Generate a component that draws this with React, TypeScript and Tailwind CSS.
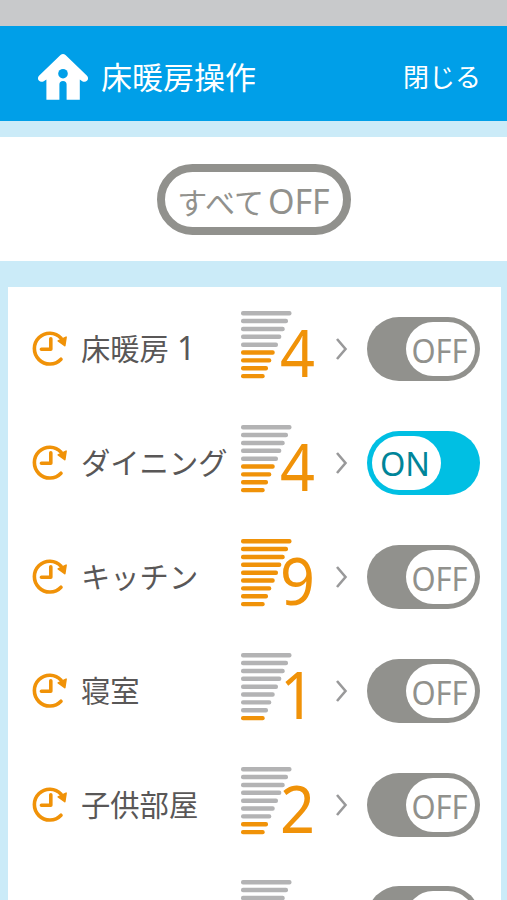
import React from "react";

const latin = "font-['Noto_Sans','Open_Sans',sans-serif]";
const cjk = "font-['Noto_Sans_CJK_JP',sans-serif]";

type Room = { name: string; number?: string; level: number; on: boolean };

const rooms: Room[] = [
  { name: "床暖房", number: "1", level: 4, on: false },
  { name: "ダイニング", level: 4, on: true },
  { name: "キッチン", level: 9, on: false },
  { name: "寝室", level: 1, on: false },
  { name: "子供部屋", level: 2, on: false },
  { name: "", level: 0, on: false },
];

function HomeIcon() {
  return (
    <svg className="mt-[2px] block h-[46px] w-[50px] shrink-0" viewBox="0 0 50 46">
      <path
        d="M22.5 1.1Q25 -1 27.5 1.1L49 21.8Q51 24.4 49.2 26.6Q47 28.8 44.2 27.2L41.8 25.6V45.8H28.6V30.5Q28.6 27 25 27Q21.4 27 21.4 30.5V45.8H8.4V25.6L5.8 27.2Q3 28.8 .8 26.6Q-1 24.4 1 21.8Z"
        fill="#fff"
      />
      <circle cx="25" cy="19.7" r="4.8" fill="#009fe8" />
    </svg>
  );
}

function TimerIcon() {
  return (
    <svg className="block h-[36px] w-[36px] shrink-0" viewBox="0 0 36 36" fill="none" stroke="#f09208">
      <path d="M29 29.2A15.4 15.4 0 1 1 29.1 8.2" strokeWidth="3.6" strokeLinecap="round" />
      <path d="M18.8 8.8V19.2H9.4" strokeWidth="3.6" strokeLinecap="round" strokeLinejoin="round" />
      <path d="M26.2 10.9L34.1 7.1L32.8 15.6Z" fill="#f09208" strokeWidth="1.6" strokeLinejoin="round" />
    </svg>
  );
}

const barWidths = [50.5, 47, 43.7, 40.3, 37, 33.7, 30.3, 27, 23.7];

function Level({ level }: { level: number }) {
  return (
    <div className="relative h-[68px] w-[74px] shrink-0">
      <svg className="block h-[68px] w-[52px]" viewBox="0 0 52 68">
        {barWidths.map((w, i) => (
          <rect
            key={i}
            x="0"
            y={i * 7.87}
            width={w}
            height="4.4"
            rx="2"
            fill={9 - i <= level ? "#f09208" : "#b3b3b4"}
          />
        ))}
      </svg>
      {level > 0 && (
        <span
          className={`absolute top-[-3px] left-[38px] block w-[37px] origin-center scale-x-[0.94] text-center text-[65px] leading-[88px] text-[#f09208] ${latin}`}
        >
          {level}
        </span>
      )}
    </div>
  );
}

function Toggle({ on, labelled }: { on: boolean; labelled: boolean }) {
  return (
    <div
      className={`flex h-[64px] w-[113px] shrink-0 items-center rounded-full px-[5px] ${
        on ? "bg-[#00bfe3]" : "justify-end bg-[#91918d]"
      }`}
    >
      <div className="flex h-[54px] w-[69px] items-center justify-center rounded-full bg-white">
        {labelled && (
          <span
            className={`block text-[32.5px] leading-[48px] ${latin} ${
              on ? "-ml-[3px] pt-[3px] text-[#008599]" : "-ml-[2px] scale-x-[0.95] pt-[5px] text-[#91918d]"
            }`}
          >
            {on ? "ON" : "OFF"}
          </span>
        )}
      </div>
    </div>
  );
}

function Row({ room }: { room: Room }) {
  return (
    <li className="flex h-[113.9px] shrink-0 items-center pl-[24px]">
      <div className="-mt-[2px]">
        <TimerIcon />
      </div>
      <span
        className={`-mt-[3px] ml-[13px] flex w-[160px] shrink-0 items-baseline text-[29.3px] leading-[40px] whitespace-nowrap text-[#595757] ${cjk}`}
      >
        {room.name}
        {room.number && <span className={`ml-[8px] text-[32px] leading-[40px] ${latin}`}>{room.number}</span>}
      </span>
      <div className="-mt-[8px]">
        <Level level={room.level} />
      </div>
      <svg className="ml-[20px] block h-[24px] w-[14px] shrink-0" viewBox="0 0 14 24" fill="none" stroke="#99999a" strokeWidth="2.6">
        <path d="M2 2L10.5 12L2 22" />
      </svg>
      <div className="ml-[18px]">
        <Toggle on={room.on} labelled={room.name !== ""} />
      </div>
    </li>
  );
}

export default function App() {
  return (
    <div className={`flex h-[900px] w-[507px] flex-col overflow-hidden bg-[#cbebf8] ${cjk}`}>
      <div className="h-[26px] shrink-0 bg-[#c8c9cb]" />
      <header className="flex h-[95px] shrink-0 items-center justify-between bg-[#009fe8] pt-[4px] pr-[26px] pl-[38px] text-white">
        <div className="flex items-center gap-[13px]">
          <HomeIcon />
          <h1 className="text-[31px] leading-[40px]">床暖房操作</h1>
        </div>
        <button className="pt-px text-[26px] leading-[40px]">閉じる</button>
      </header>
      <section className="mt-4 flex h-[124px] shrink-0 items-center justify-center bg-white">
        <button className="flex h-[71px] w-[194px] items-center justify-center rounded-full border-[8px] border-[#91918d] pt-[3px] text-[#91918d]">
          <span className="text-[30px] leading-[40px]">すべて</span>
          <span className={`ml-[4px] text-[34px] leading-[40px] ${latin}`}>OFF</span>
        </button>
      </section>
      <main className="mt-[26px] mr-[6px] ml-[8px] min-h-0 flex-1 overflow-hidden bg-white pt-[5px]">
        <ul className="flex flex-col">
          {rooms.map((room, i) => (
            <Row key={i} room={room} />
          ))}
        </ul>
      </main>
    </div>
  );
}
